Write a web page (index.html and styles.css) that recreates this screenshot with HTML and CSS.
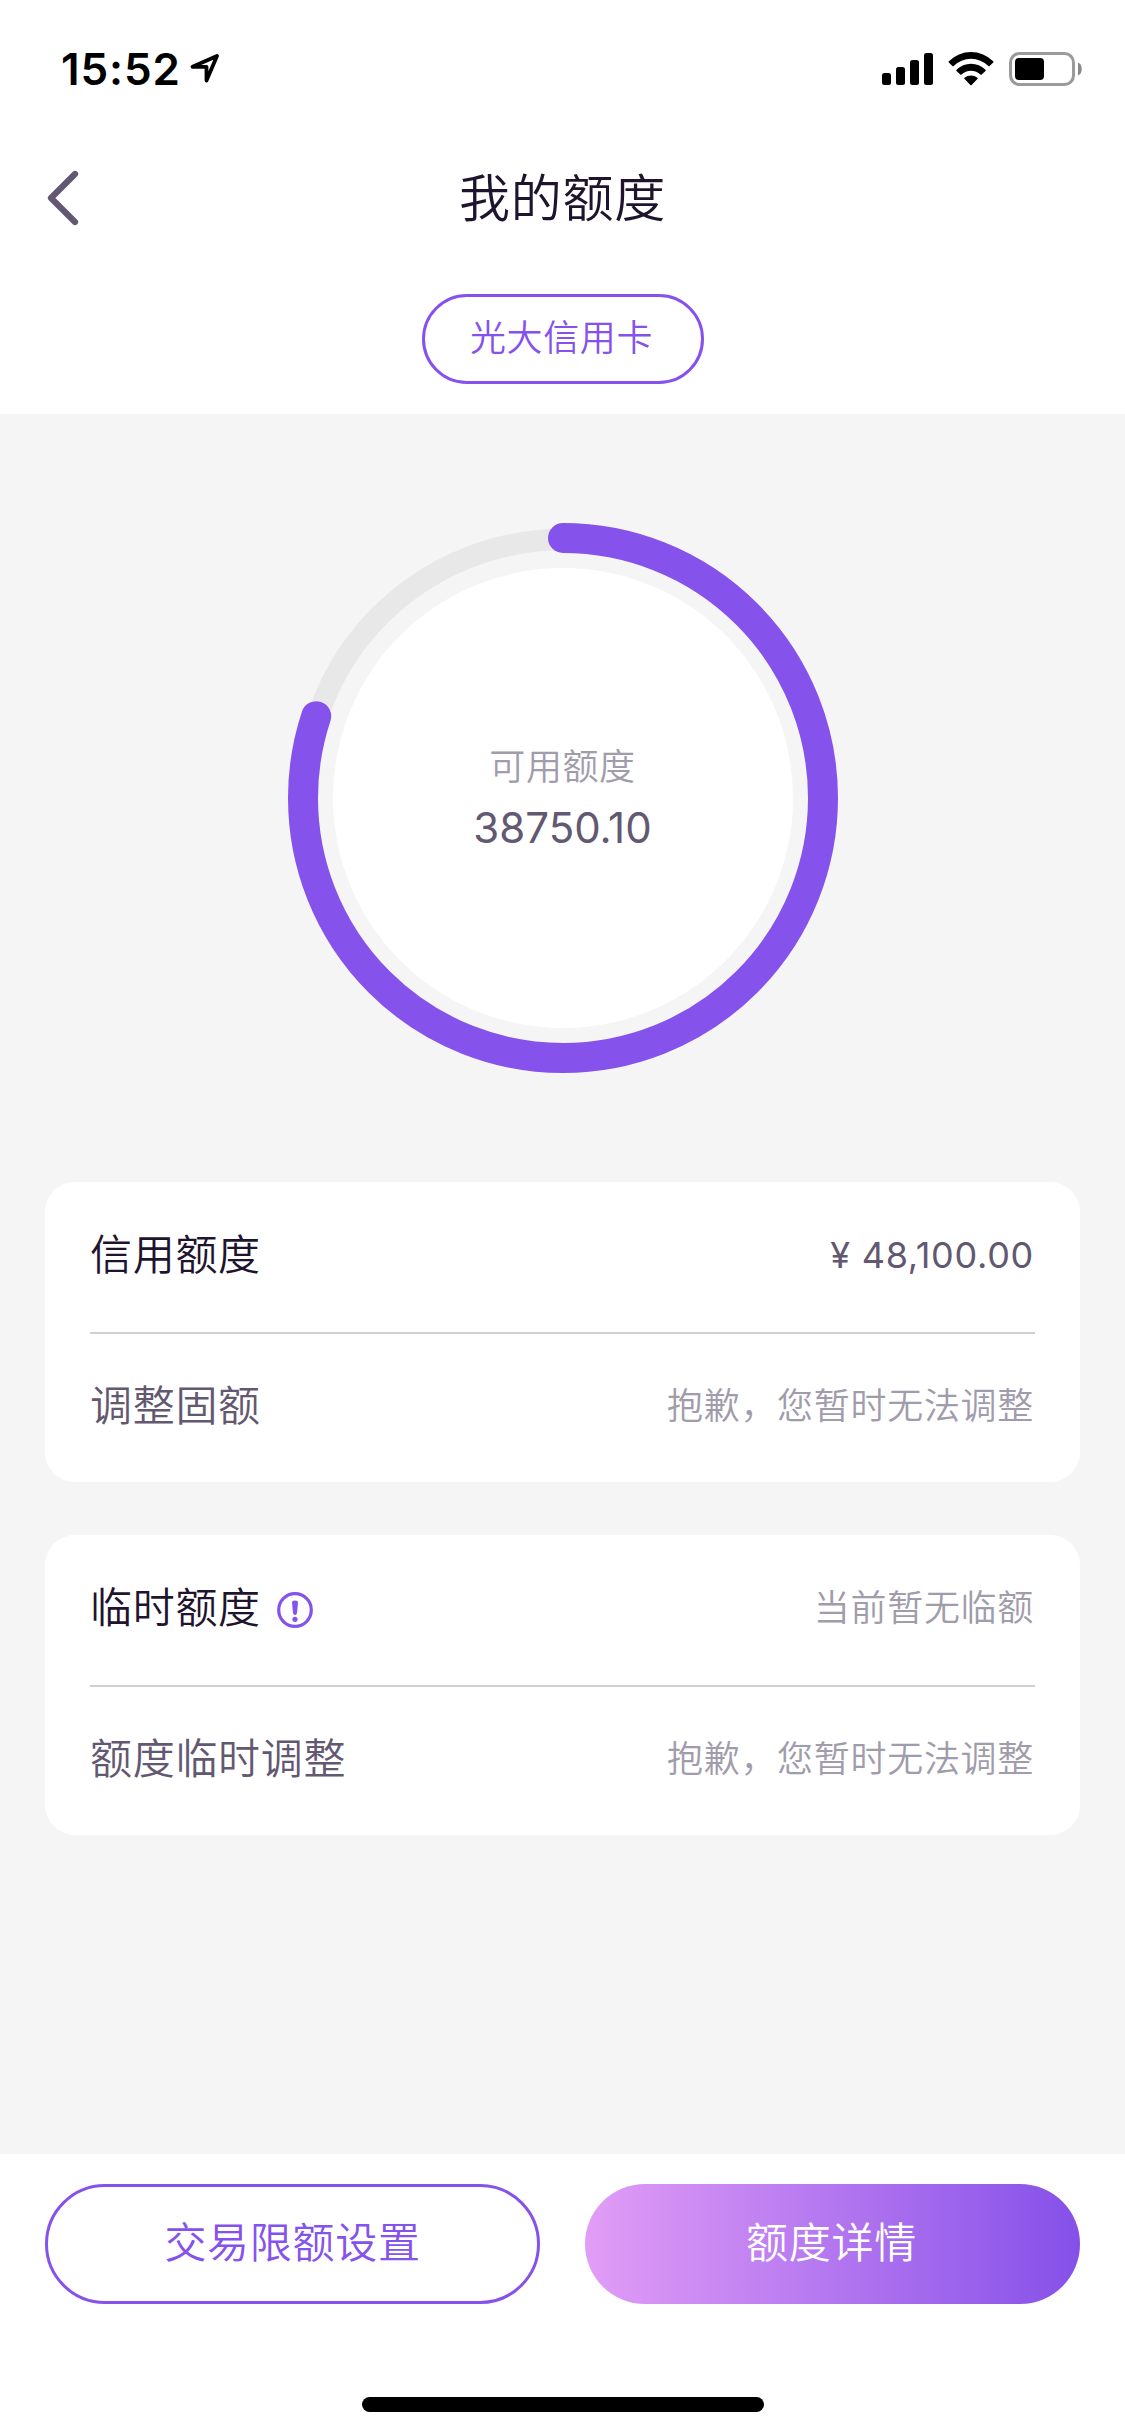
FILE: index.html
```html
<!DOCTYPE html>
<html lang="zh-CN">
<head>
<meta charset="utf-8">
<title>我的额度</title>
<link rel="stylesheet" href="styles.css">
</head>
<body>
<div class="screen">
  <header class="header">
    <div class="status">
      <span class="time">15:52</span>
      <svg class="location" width="32" height="32" viewBox="0 0 32 32"><path d="M3.500 14.800 28 4 17.500 28.500V14.800Z" fill="none" stroke="#000" stroke-width="3.800" stroke-linejoin="round"/></svg>
      <svg class="signal" width="52" height="34" viewBox="0 0 52 34"><rect y="21" width="9" height="12" rx="2.5"/><rect x="14" y="15" width="9" height="18" rx="2.5"/><rect x="28" y="8" width="9" height="25" rx="2.5"/><rect x="42" y="1" width="9" height="32" rx="2.5"/></svg>
      <svg class="wifi" width="46" height="34" viewBox="0 0 46 34"><path d="M.8 9.200a31.500 31.500 0 0 1 44.400 0q.6.6 0 1.200l-3.600 3.600q-.6.600-1.200 0a24.800 24.800 0 0 0-34.800 0q-.6.600-1.200 0L.8 10.400q-.6-.6 0-1.200ZM8.500 17.700a20.500 20.500 0 0 1 29 0q.6.6 0 1.200l-3.800 3.700q-.6.600-1.200 0a13.700 13.700 0 0 0-19 0q-.6.600-1.200 0l-3.800-3.700q-.6-.6 0-1.200ZM16.600 25.800a9.800 9.800 0 0 1 12.800 0q.7.600 0 1.300l-5.800 5.800q-.6.500-1.200 0l-5.800-5.800q-.7-.7 0-1.300Z"/></svg>
      <svg class="battery" width="74" height="34" viewBox="0 0 74 34"><rect x="1.500" y="1.500" width="63" height="31" rx="9" fill="none" stroke="#9b9b9b" stroke-width="3"/><rect x="6" y="6" width="29" height="22" rx="4"/><path d="M69 10.500v13c5-2 5-11 0-13Z" fill="#8a8a8a"/></svg>
    </div>
    <div class="nav">
      <svg class="back" width="34" height="60" viewBox="0 0 34 60"><path d="M30 6 6 30l24 24" fill="none" stroke="#635872" stroke-width="6.200" stroke-linecap="round" stroke-linejoin="round"/></svg>
      <h1 class="title">我的额度</h1>
    </div>
    <div class="card-name">光大信用卡</div>
  </header>

  <main class="content">
    <section class="gauge">
      <svg class="ring" viewBox="0 0 550 550">
        <circle cx="275" cy="275" r="258.500" fill="none" stroke="#e8e8e8" stroke-width="21.500"/>
        <circle cx="275" cy="275" r="230" fill="#fff"/>
        <circle cx="275" cy="275" r="260" fill="none" stroke="#8652ec" stroke-width="30" stroke-linecap="round" pathLength="1000" stroke-dasharray="801 1000" transform="rotate(-90 275 275)"/>
      </svg>
      <div class="gauge-text">
        <span class="gauge-label">可用额度</span>
        <span class="gauge-value">38750.10</span>
      </div>
    </section>

    <section class="card">
      <div class="row">
        <span class="label">信用额度</span>
        <span class="amount">¥ 48,100.00</span>
      </div>
      <div class="row">
        <span class="label muted">调整固额</span>
        <span class="note">抱歉，您暂时无法调整</span>
      </div>
    </section>

    <section class="card">
      <div class="row">
        <span class="label">临时额度</span>
        <svg class="info" width="36" height="36" viewBox="0 0 36 36"><circle cx="18" cy="18" r="16.300" fill="none" stroke="#8652ec" stroke-width="3.200"/><path d="M15 10.500q0-2 3-2t3 2l-1 10.500q-.3 2-2 2t-2-2Z" fill="#8652ec"/><circle cx="18" cy="27.300" r="2.600" fill="#8652ec"/></svg>
        <span class="note">当前暂无临额</span>
      </div>
      <div class="row">
        <span class="label muted">额度临时调整</span>
        <span class="note">抱歉，您暂时无法调整</span>
      </div>
    </section>
  </main>

  <footer class="footer">
    <div class="actions">
      <div class="button outline">交易限额设置</div>
      <div class="button filled">额度详情</div>
    </div>
    <div class="home-indicator"></div>
  </footer>
</div>
</body>
</html>
```
FILE: styles.css
```css
* { box-sizing: border-box; }

body {
  margin: 0;
  background: #fff;
  font-family: Inter, "Noto Sans CJK SC", sans-serif;
  font-weight: 350;
  color: #1e142e;
}

.screen {
  width: 1125px;
  height: 2436px;
  display: flex;
  flex-direction: column;
}

.header {
  height: 414px;
  display: flex;
  flex-direction: column;
  align-items: center;
  background: #fff;
}

.status {
  width: 100%;
  height: 132px;
  padding: 52px 42px 0 61px;
  display: flex;
  align-items: flex-start;
}

.time {
  width: 119px;
  font-size: 44px;
  line-height: 34px;
  font-weight: 600;
  letter-spacing: 0.9px;
  color: #000;
  white-space: nowrap;
}

.location { margin-left: 9px; }
.signal { margin-left: auto; }
.wifi { margin-left: 14px; }
.battery { margin-left: 15px; }

.nav {
  width: 100%;
  height: 132px;
  padding: 0 45px;
  display: grid;
  grid-template-columns: 1fr auto 1fr;
  align-items: center;
}

.title {
  margin: 0;
  padding-top: 2px;
  font-size: 51px;
  line-height: 72px;
  font-weight: 350;
  letter-spacing: 0.7px;
}

.card-name {
  width: 282px;
  height: 90px;
  margin-top: 30px;
  padding-right: 2px;
  border: 3px solid #8652ec;
  border-radius: 45px;
  font-size: 36px;
  line-height: 82px;
  letter-spacing: 0.6px;
  text-align: center;
  color: #8652ec;
}

.content {
  height: 1740px;
  padding: 109px 45px 0;
  background: #f5f5f5;
}

.gauge {
  width: 550px;
  height: 550px;
  margin: 0 auto 109px;
  display: grid;
}

.ring, .gauge-text { grid-area: 1 / 1; }

.gauge-text {
  padding-top: 214px;
  display: flex;
  flex-direction: column;
  align-items: center;
}

.gauge-label {
  font-size: 36px;
  line-height: 60px;
  letter-spacing: 0.6px;
  color: #a09cab;
}

.gauge-value {
  font-size: 42px;
  line-height: 60px;
  margin-top: 1px;
  font-weight: 400;
  color: #635872;
}

.card {
  height: 300px;
  margin-bottom: 53px;
  padding: 0 45px;
  border-radius: 30px;
  background: #fff;
}

.row {
  height: 150px;
  padding: 0 1px 4px 0;
  display: flex;
  align-items: center;
}

.row + .row {
  border-top: 2px solid #d0d0d0;
}

.label {
  font-size: 42px;
  line-height: 60px;
  letter-spacing: 0.7px;
}

.muted { color: #635872; }

.info { margin: 4px 0 0 16px; }

.amount, .note {
  margin-left: auto;
  font-size: 36px;
  line-height: 54px;
}

.amount { font-weight: 400; color: #635872; letter-spacing: 0.7px; }
.note { color: #a09cab; letter-spacing: 0.7px; }

.footer {
  flex: 1;
  padding: 30px 45px 24px;
  display: flex;
  flex-direction: column;
  justify-content: space-between;
  align-items: center;
  background: #fff;
}

.actions {
  width: 100%;
  display: grid;
  grid-template-columns: 1fr 1fr;
  gap: 45px;
}

.button {
  height: 120px;
  border-radius: 60px;
  font-size: 42px;
  line-height: 111px;
  letter-spacing: 0.7px;
  text-align: center;
}

.outline {
  border: 3px solid #8652ec;
  color: #8652ec;
}

.filled {
  background: linear-gradient(90deg, #e29df6, #8550e9);
  border: 0;
  padding: 3px 2px 0 0;
  color: #fff;
}

.home-indicator {
  width: 402px;
  height: 15px;
  border-radius: 8px;
  background: #000;
}
```
